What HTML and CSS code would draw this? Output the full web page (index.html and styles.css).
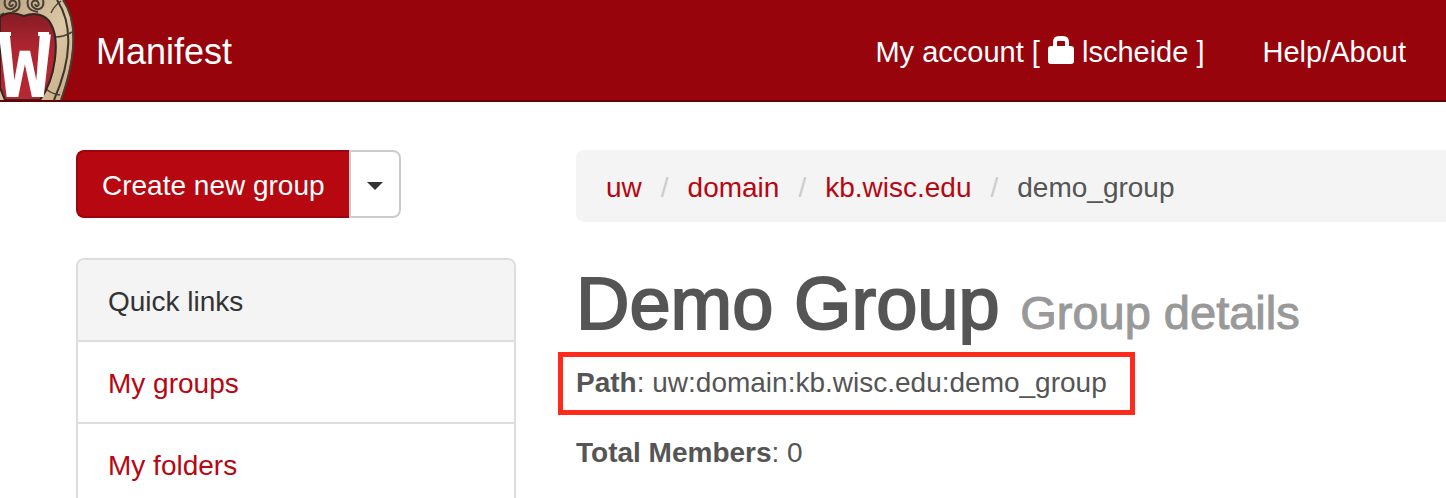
FILE: index.html
```html
<!DOCTYPE html>
<html lang="en">
<head>
<meta charset="utf-8">
<title>Manifest - Demo Group</title>
<link rel="stylesheet" href="styles.css">
</head>
<body>
<header class="navbar">
  <a class="logo" href="#" aria-label="University home">
    <svg width="76" height="100" viewBox="0 0 76 100" aria-hidden="true">
      <defs>
        <linearGradient id="stone" x1="0" y1="0" x2="1" y2="1">
          <stop offset="0" stop-color="#b9a27f"/>
          <stop offset=".55" stop-color="#dcc8a6"/>
          <stop offset="1" stop-color="#c4ab83"/>
        </linearGradient>
        <linearGradient id="shield" x1="0" y1="0" x2="0" y2="1">
          <stop offset="0" stop-color="#861c24"/>
          <stop offset=".4" stop-color="#ae2530"/>
          <stop offset="1" stop-color="#b62833"/>
        </linearGradient>
      </defs>
      <path d="M0 0H63C76 20 76 54 61 100H0Z" fill="url(#stone)"/>
      <path d="M63 0C77 20 77 54 61 100" fill="none" stroke="#4e3b30" stroke-width="2"/>
      <path d="M57 0C73 24 72 59 54 100" fill="none" stroke="#3f352d" stroke-width="2"/>
      <path d="M51 13Q54 6 61 1M56 37Q64 37 72 32M46 89Q52 94 60 95M0 87L4 91M0 15L4 13" fill="none" stroke="#494037" stroke-width="1.5"/>
      <path d="M0 17C8 11 16 13 24 16C34 12 46 14 51 24C60 40 56 78 40 100H5L0 88Z" fill="url(#shield)" stroke="#33251f" stroke-width="2"/>
      <path d="M5 0C3 8 10 12 15 7C19 3 13 -2 10 2C8 6 12 8 13 4M19 0C21 8 18 11 12 12M43 0C45 8 38 12 33 7C29 3 35 -2 38 2C40 6 36 8 35 4M28 0C26 8 31 11 38 12" fill="none" stroke="#493f37" stroke-width="2"/>
      <text class="logo-letter" x="25" y="97" text-anchor="middle">W</text>
      <path d="M0 32H11V36H0ZM38 32H49V36H38Z" fill="#fff"/>
    </svg>
  </a>
  <a class="brand" href="#">Manifest</a>
  <nav class="nav">
    <a href="#">My account [
      <svg class="lock" width="26" height="28" viewBox="0 0 26 28" aria-hidden="true"><path fill="#fff" fill-rule="evenodd" d="M5 10V6Q5 0 11 0H15Q21 0 21 6V10H23Q26 10 26 13V25Q26 28 23 28H3Q0 28 0 25V13Q0 10 3 10ZM9 10H17V6Q17 5 16 5H10Q9 5 9 6Z"/></svg>
      lscheide ]</a>
    <a href="#">Help/About</a>
  </nav>
</header>
<div class="page">
  <aside class="sidebar">
    <div class="split">
      <button class="create" type="button">Create new group</button>
      <button class="toggle" type="button" aria-label="More create options"><span class="caret"></span></button>
    </div>
    <section class="panel">
      <h2 class="panel-title">Quick links</h2>
      <a href="#">My groups</a>
      <a href="#">My folders</a>
    </section>
  </aside>
  <main class="content">
    <ol class="crumbs">
      <li><a href="#">uw</a></li>
      <li><a href="#">domain</a></li>
      <li><a href="#">kb.wisc.edu</a></li>
      <li>demo_group</li>
    </ol>
    <h1 class="title">Demo Group <small>Group details</small></h1>
    <p class="detail marked"><strong>Path</strong>: uw:domain:kb.wisc.edu:demo_group</p>
    <p class="detail"><strong>Total Members</strong>: 0</p>
  </main>
</div>
</body>
</html>
```
FILE: styles.css
```css
* { box-sizing: border-box; }
html { overflow: hidden; }
body {
  margin: 0;
  background: #fff;
  color: #555;
  font: 28px/40px "Liberation Sans", Arial, sans-serif;
}
a { color: #b70711; text-decoration: none; }

.navbar {
  display: flex;
  align-items: center;
  background: #97040c;
  border-bottom: 2px solid #640006;
}
.navbar a { color: #fff; }
.logo svg { display: block; }
.logo-letter {
  fill: #fff;
  font: bold 86px "DejaVu Sans Mono", monospace;
}
.brand { margin-left: 20px; padding-top: 4px; font-size: 36px; }
.nav {
  display: flex;
  gap: 58px;
  margin-left: auto;
  padding: 4px 40px 0 0;
  font-size: 29px;
}
.lock { vertical-align: -2px; }

.page {
  display: grid;
  grid-template-columns: 440px minmax(0, 1fr);
  gap: 60px;
  padding: 48px 0 0 76px;
}
.split { display: flex; margin-bottom: 40px; }
.split button { font: inherit; border: 2px solid; }
.split .create {
  padding: 14px 24px 10px;
  background: #b70711;
  border-color: #9d050e;
  border-right: 0;
  border-radius: 8px 0 0 8px;
  color: #fff;
}
.split .toggle {
  display: flex;
  align-items: center;
  padding: 4px 16px 0;
  background: #fff;
  border-color: #ccc;
  border-radius: 0 8px 8px 0;
}
.caret {
  border: 8px solid transparent;
  border-top-color: #333;
  border-bottom: 0;
}

.panel { border: 2px solid #ddd; border-radius: 8px; overflow: hidden; }
.panel-title {
  margin: 0;
  padding: 22px 30px 18px;
  background: #f4f4f4;
  color: #333;
  font: inherit;
}
.panel a { display: block; padding: 22px 30px 18px; border-top: 2px solid #ddd; }

.crumbs {
  display: flex;
  margin: 0 0 42px;
  padding: 18px 30px 14px;
  background: #f4f4f4;
  border-radius: 8px 0 0 8px;
  list-style: none;
}
.crumbs li + li::before { content: "/"; padding: 0 19px; color: #ccc; }
.title {
  margin: 0 0 10px;
  font-size: 74px;
  font-weight: 400;
  line-height: 80px;
  -webkit-text-stroke: 2px;
}
.title small { color: #999; font-size: 47px; -webkit-text-stroke: 1px; }
.detail { margin: 0 0 30px; }
.marked { position: relative; width: fit-content; }
.marked::after {
  content: "";
  position: absolute;
  inset: -11px -28px -12px -18px;
  border: 5px solid #ff2a1c;
}
```
